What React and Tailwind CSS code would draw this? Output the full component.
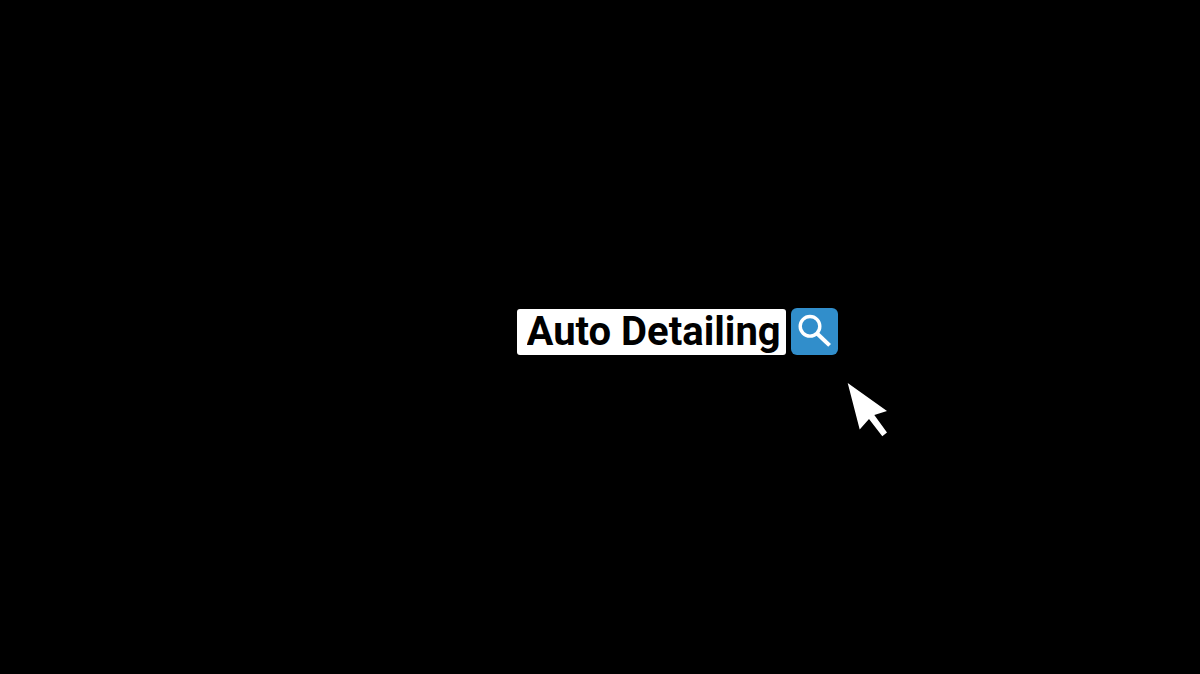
import React, { useState } from 'react';

// Magnifier drawn inside the search button
const SearchIcon = () => (
  <svg className="w-full h-full" viewBox="0 0 47 47" fill="none" stroke="white" aria-hidden="true">
    <circle cx="19" cy="18.3" r="9.8" strokeWidth="3.4" />
    <path d="M25.8 25.2 L38.6 37.4" strokeWidth="4" />
  </svg>
);

// White arrow pointer resting below the button
const Pointer = () => (
  <svg
    className="absolute left-full top-full ml-[9px] mt-7 w-10 h-[54px] pointer-events-none"
    viewBox="0 0 40 54"
    fill="white"
    aria-hidden="true"
  >
    <path d="M0.7 0 L40 28 L27.3 32 L40 49.5 L35.3 53.2 L22 36 L12.7 46.5 Z" />
  </svg>
);

const App = () => {
  const [query, setQuery] = useState('Auto Detailing');

  return (
    <main className="min-h-screen bg-black flex items-center justify-center pl-[154px] pb-3">
      <form
        className="relative flex items-end gap-[5px]"
        onSubmit={(e) => e.preventDefault()}
      >
        <input
          type="text"
          aria-label="Search"
          value={query}
          onChange={(e) => setQuery(e.target.value)}
          className="w-[269px] h-[46px] rounded-[3px] bg-white pl-[10px] text-black font-bold text-[40px] leading-[46px] outline-none font-['Roboto',sans-serif]"
        />
        <button type="submit" aria-label="Search" className="w-[47px] h-[47px] rounded-[6px] bg-[#318ecb]">
          <SearchIcon />
        </button>
        <Pointer />
      </form>
    </main>
  );
};

export default App;
